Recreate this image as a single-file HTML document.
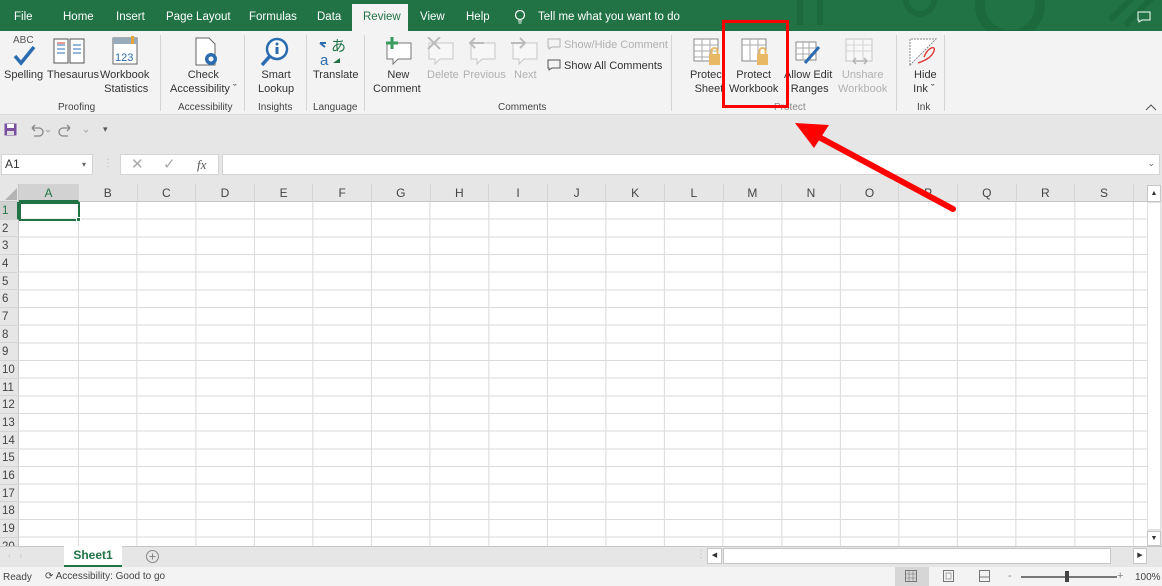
<!DOCTYPE html>
<html><head><meta charset="utf-8"><style>
*{margin:0;padding:0;box-sizing:border-box}
body{width:1162px;height:586px;overflow:hidden;background:#e6e6e6;font-family:"Liberation Sans",sans-serif;font-size:11px;color:#333;position:relative}
.a{position:absolute}
#tabs{left:0;top:0;width:1162px;height:31px;background:#217346}
.tab{position:absolute;top:11px;color:#fff;font-size:11.5px}
#rib{left:0;top:31px;width:1162px;height:84px;background:#f3f3f3;border-bottom:1px solid #dadada}
.lbl{position:absolute;text-align:center;font-size:11px;color:#333;line-height:14px;white-space:nowrap}
.dis{color:#b0b0b0}
.gl{position:absolute;top:71px;font-size:10px;color:#444;text-align:center}
.sep{position:absolute;top:4px;width:1px;height:76px;background:#d4d4d4}
.ch{position:absolute;top:184px;height:18px;border-right:1px solid #d4d4d4;text-align:center;font-size:12px;line-height:19px;color:#444;border-bottom:1px solid #c6c6c6}
.rh{position:absolute;left:0;width:19px;font-size:11.5px;color:#444;padding-left:2px;border-bottom:1px solid #d4d4d4;height:17.67px;line-height:18px}
</style></head><body>
<div id="tabs" class="a">
<div class="a" style="left:352px;top:4px;width:56px;height:28px;background:#f3f3f3"></div>
<span class="tab" style="left:14px">File</span>
<span class="tab" style="left:63px">Home</span>
<span class="tab" style="left:116px">Insert</span>
<span class="tab" style="left:166px">Page Layout</span>
<span class="tab" style="left:249px">Formulas</span>
<span class="tab" style="left:317px">Data</span>
<span class="tab" style="left:363px;color:#217346">Review</span>
<span class="tab" style="left:420px">View</span>
<span class="tab" style="left:466px">Help</span>
<svg class="a" style="left:514px;top:9px" width="12" height="16"><circle cx="6" cy="6" r="4.5" fill="none" stroke="#fff" stroke-width="1.2"/><path d="M4 12h4M4.5 14h3" stroke="#fff"/></svg>
<span class="tab" style="left:538px">Tell me what you want to do</span>
<svg class="a" style="left:780px;top:0" width="380" height="31" opacity=".25"><circle cx="230" cy="5" r="30" fill="none" stroke="#0d4d26" stroke-width="10"/><circle cx="140" cy="0" r="14" fill="none" stroke="#0d4d26" stroke-width="6"/><path d="M20 0v25M40 0v25M330 20l30-30M345 25l30-30" stroke="#0d4d26" stroke-width="6"/></svg>
<svg class="a" style="left:1137px;top:11px" width="14" height="12"><path d="M1 1h12v8H5l-3 2V9H1z" fill="none" stroke="#fff"/></svg>
</div>
<div id="rib" class="a">
<div class="a" style="left:13px;top:4px;font-size:10px;color:#555">ABC</div>
<svg class="a" style="left:12px;top:14px" width="26" height="22"><path d="M3 11l6 7L22 2" stroke="#2b6cb0" stroke-width="3.5" fill="none"/></svg>
<svg class="a" style="left:52px;top:5px" width="36" height="30"><path d="M2 3h14v24H2zM18 3h14v24H18z" fill="#fff" stroke="#555"/><path d="M5 9h8M5 13h8M5 17h8M21 9h8M21 13h8M21 17h8" stroke="#2b6cb0"/><path d="M5 7h8" stroke="#d33"/></svg>
<svg class="a" style="left:111px;top:5px" width="28" height="30"><rect x="2" y="2" width="24" height="26" fill="#fff" stroke="#666"/><rect x="2" y="2" width="24" height="6" fill="#9ab"/><text x="4" y="25" font-size="11" fill="#2b6cb0" font-family="Liberation Sans">123</text><rect x="20" y="0" width="3" height="8" fill="#e8a33d"/></svg>
<div class="lbl" style="left:4px;top:37px">Spelling</div>
<div class="lbl" style="left:47px;top:37px">Thesaurus</div>
<div class="lbl" style="left:100px;top:37px">Workbook<br>&nbsp;Statistics</div>
<div class="gl" style="left:58px">Proofing</div>
<div class="sep" style="left:160px"></div>
<svg class="a" style="left:193px;top:6px" width="28" height="30"><path d="M3 1h13l6 6v21H3z" fill="#fff" stroke="#666"/><circle cx="18" cy="22" r="6" fill="#2b6cb0"/><circle cx="18" cy="22" r="2.5" fill="#fff"/></svg>
<div class="lbl" style="left:170px;top:37px;text-align:center">Check<br>Accessibility ˇ</div>
<div class="gl" style="left:178px">Accessibility</div>
<div class="sep" style="left:244px"></div>
<svg class="a" style="left:260px;top:6px" width="30" height="30"><circle cx="17" cy="12" r="10" fill="#fff" stroke="#2b6cb0" stroke-width="2.5"/><path d="M10 19L2 28" stroke="#2b6cb0" stroke-width="3.5"/><path d="M17 10v7" stroke="#2b6cb0" stroke-width="3"/><circle cx="17" cy="7" r="1.5" fill="#2b6cb0"/></svg>
<div class="lbl" style="left:258px;top:37px">Smart<br>Lookup</div>
<div class="gl" style="left:258px">Insights</div>
<div class="sep" style="left:306px"></div>
<svg class="a" style="left:318px;top:6px" width="30" height="30"><text x="13" y="14" font-size="15" fill="#217346" font-family="Noto Sans CJK JP">あ</text><text x="2" y="28" font-size="15" fill="#2b6cb0" font-family="Liberation Sans">a</text><path d="M2 6l5 4M2 6h6" stroke="#2b6cb0" stroke-width="2"/><path d="M15 26l7-5v5z" fill="#217346"/></svg>
<div class="lbl" style="left:313px;top:37px">Translate</div>
<div class="gl" style="left:313px">Language</div>
<div class="sep" style="left:364px"></div>
<svg class="a" style="left:382px;top:6px" width="32" height="30"><path d="M5 6h24v16H16l-5 5v-5H5z" fill="#fff" stroke="#777"/><path d="M10 0v12M4 6h12" stroke="#3a9a5e" stroke-width="3"/></svg>
<svg class="a" style="left:424px;top:6px" width="32" height="30" opacity=".35"><path d="M5 6h24v16H16l-5 5v-5H5z" fill="#fff" stroke="#777"/><path d="M4 0l12 12M16 0L4 12" stroke="#555" stroke-width="2"/></svg>
<svg class="a" style="left:466px;top:6px" width="32" height="30" opacity=".35"><path d="M5 6h24v16H16l-5 5v-5H5z" fill="#fff" stroke="#777"/><path d="M18 6H4M9 1L4 6l5 5" stroke="#555" stroke-width="2" fill="none"/></svg>
<svg class="a" style="left:508px;top:6px" width="32" height="30" opacity=".35"><path d="M5 6h24v16H16l-5 5v-5H5z" fill="#fff" stroke="#777"/><path d="M3 6h14M12 1l5 5-5 5" stroke="#555" stroke-width="2" fill="none"/></svg>
<div class="lbl" style="left:373px;top:37px">&nbsp;New<br>Comment</div>
<div class="lbl dis" style="left:427px;top:37px">Delete</div>
<div class="lbl dis" style="left:463px;top:37px">Previous</div>
<div class="lbl dis" style="left:514px;top:37px">Next</div>
<svg class="a" style="left:547px;top:7px" width="14" height="12" opacity=".4"><path d="M1 1h12v8H5l-3 2V9H1z" fill="none" stroke="#555"/></svg>
<div class="lbl dis" style="left:564px;top:7px">Show/Hide Comment</div>
<svg class="a" style="left:547px;top:28px" width="14" height="12"><path d="M1 1h12v8H5l-3 2V9H1z" fill="none" stroke="#555"/></svg>
<div class="lbl" style="left:564px;top:28px">Show All Comments</div>
<div class="gl" style="left:498px">Comments</div>
<div class="sep" style="left:671px"></div>
<svg class="a" style="left:693px;top:7px" width="30" height="30"><rect x="1" y="1" width="24" height="22" fill="#fff" stroke="#888"/><path d="M1 7h24M1 13h24M1 19h24M9 1v22M17 1v22" stroke="#aaa"/><rect x="16" y="16" width="11" height="11" fill="#e8b864"/><path d="M18.5 16v-3a3 3 0 016 0v3" fill="none" stroke="#e8b864" stroke-width="2"/></svg>
<svg class="a" style="left:741px;top:7px" width="30" height="30"><rect x="1" y="1" width="24" height="22" fill="#fff" stroke="#888"/><path d="M1 7h24M9 1v22M17 1v22" stroke="#aaa"/><rect x="16" y="16" width="11" height="11" fill="#e8b864"/><path d="M18.5 16v-3a3 3 0 016 0v3" fill="none" stroke="#e8b864" stroke-width="2"/></svg>
<svg class="a" style="left:795px;top:8px" width="28" height="28"><rect x="1" y="3" width="20" height="18" fill="#fff" stroke="#888"/><path d="M1 9h20M1 15h20M8 3v18M14 3v18" stroke="#aaa"/><path d="M10 24L24 8" stroke="#2b6cb0" stroke-width="3"/></svg>
<svg class="a" style="left:845px;top:7px" width="30" height="30" opacity=".4"><rect x="1" y="1" width="26" height="22" fill="#fff" stroke="#888"/><path d="M1 7h26M1 13h26M9 1v22M18 1v22" stroke="#aaa"/><path d="M8 23h14M8 23l3-3M8 23l3 3M22 23l-3-3M22 23l-3 3" stroke="#555" stroke-width="1.5"/></svg>
<div class="lbl" style="left:690px;top:37px">Protect<br>&nbsp;Sheet</div>
<div class="lbl" style="left:729px;top:37px">Protect<br>Workbook</div>
<div class="lbl" style="left:784px;top:37px">Allow Edit<br>&nbsp;Ranges</div>
<div class="lbl dis" style="left:838px;top:37px">Unshare<br>Workbook</div>
<div class="gl" style="left:774px;color:#888">Protect</div>
<div class="sep" style="left:896px"></div>
<svg class="a" style="left:908px;top:6px" width="30" height="30"><path d="M2 28V2h26L2 28z" fill="#fff" stroke="#888" stroke-dasharray="2 1"/><path d="M10 26c6-2 14-6 16-12s-6-4-10 6" fill="none" stroke="#d33" stroke-width="1.3"/></svg>
<div class="lbl" style="left:911px;top:37px">&nbsp;Hide<br>Ink ˇ</div>
<div class="gl" style="left:917px">Ink</div>
<div class="sep" style="left:944px"></div>
<svg class="a" style="left:1145px;top:72px" width="12" height="8"><path d="M1 7l5-5 5 5" fill="none" stroke="#555"/></svg>
</div>
<svg class="a" style="left:4px;top:123px" width="13" height="13"><rect x="0.5" y="0.5" width="12" height="12" fill="#7b4fa0"/><rect x="3" y="1" width="7" height="4" fill="#fff"/><rect x="3" y="8" width="7" height="4" fill="#ddd"/></svg>
<svg class="a" style="left:28px;top:123px" width="70" height="14"><path d="M4 5h7a4 4 0 010 8H6M4 5l3-3M4 5l3 3" fill="none" stroke="#888" stroke-width="1.3"/><path d="M56 5h-7a4 4 0 000 8h5M56 5l-3-3M56 5l-3 3" fill="none" stroke="#888" stroke-width="1.3" transform="translate(-14 0)"/><path d="M18 7l2 2 2-2M56 7l2 2 2-2" fill="none" stroke="#aaa"/></svg>
<div class="a" style="left:103px;top:124px;font-size:9px;color:#555">▾</div>
<div class="a" style="left:1px;top:154px;width:92px;height:21px;background:#fff;border:1px solid #d4d4d4;font-size:12px;line-height:19px;padding-left:3px">A1<span style="position:absolute;right:6px;font-size:8px;color:#666">▾</span></div>
<div class="a" style="left:103px;top:158px;color:#bbb;font-size:10px">⋮</div>
<div class="a" style="left:120px;top:154px;width:99px;height:21px;background:#fff;border:1px solid #d4d4d4;color:#aaa;font-size:15px;line-height:19px"><span style="position:absolute;left:10px">✕</span><span style="position:absolute;left:42px">✓</span><span style="position:absolute;left:76px;font-family:'Liberation Serif';font-style:italic;color:#555;font-size:13px">fx</span></div>
<div class="a" style="left:222px;top:154px;width:938px;height:21px;background:#fff;border:1px solid #d4d4d4"><span style="position:absolute;right:4px;top:3px;font-size:9px;color:#666">⌄</span></div>
<div class="a" style="left:19px;top:202px;width:1128px;height:344px;background-color:#fff;background-image:repeating-linear-gradient(90deg,transparent 0 57.6px,#dadada 57.6px 58.6px),repeating-linear-gradient(180deg,transparent 0 16.67px,#dadada 16.67px 17.67px);background-position:1.4px 0,0 0"></div>
<div class="a" style="left:0;top:184px;width:19px;height:18px;background:#e6e6e6;border-right:1px solid #c6c6c6;border-bottom:1px solid #c6c6c6"><svg width="19" height="18"><path d="M17 4v12H5z" fill="#b4b4b4"/></svg></div>
<div class="ch" style="left:19px;width:60px;background:#d2d2d2;color:#217346;border-bottom:2px solid #217346">A</div>
<div class="ch" style="left:79px;width:58.6px">B</div><div class="ch" style="left:137.6px;width:58.6px">C</div><div class="ch" style="left:196.2px;width:58.6px">D</div><div class="ch" style="left:254.8px;width:58.6px">E</div><div class="ch" style="left:313.4px;width:58.6px">F</div><div class="ch" style="left:372px;width:58.6px">G</div><div class="ch" style="left:430.6px;width:58.6px">H</div><div class="ch" style="left:489.2px;width:58.6px">I</div><div class="ch" style="left:547.8px;width:58.6px">J</div><div class="ch" style="left:606.4px;width:58.6px">K</div><div class="ch" style="left:665px;width:58.6px">L</div><div class="ch" style="left:723.6px;width:58.6px">M</div><div class="ch" style="left:782.2px;width:58.6px">N</div><div class="ch" style="left:840.8px;width:58.6px">O</div><div class="ch" style="left:899.4px;width:58.6px">P</div><div class="ch" style="left:958px;width:58.6px">Q</div><div class="ch" style="left:1016.6px;width:58.6px">R</div><div class="ch" style="left:1075.2px;width:58.6px">S</div>
<div class="a" style="left:1133px;top:184px;width:14px;height:18px;border-bottom:1px solid #c6c6c6"></div>
<div class="a" style="left:0;top:202px;width:19px;height:344px;background:#e6e6e6;border-right:1px solid #c6c6c6"></div>
<div class="rh" style="top:202px;background:#d2d2d2;color:#217346;border-right:2px solid #217346">1</div>
<div class="rh" style="top:219.7px">2</div><div class="rh" style="top:237.3px">3</div><div class="rh" style="top:255px">4</div><div class="rh" style="top:272.7px">5</div><div class="rh" style="top:290.3px">6</div><div class="rh" style="top:308px">7</div><div class="rh" style="top:325.7px">8</div><div class="rh" style="top:343.3px">9</div><div class="rh" style="top:361px">10</div><div class="rh" style="top:378.7px">11</div><div class="rh" style="top:396.3px">12</div><div class="rh" style="top:414px">13</div><div class="rh" style="top:431.7px">14</div><div class="rh" style="top:449.3px">15</div><div class="rh" style="top:467px">16</div><div class="rh" style="top:484.7px">17</div><div class="rh" style="top:502.3px">18</div><div class="rh" style="top:520px">19</div><div class="rh" style="top:537.7px;height:9px;overflow:hidden">20</div>
<div class="a" style="left:19px;top:202px;width:61px;height:19px;border:2px solid #217346"></div>
<div class="a" style="left:76px;top:217px;width:5px;height:5px;background:#217346;border:1px solid #fff"></div>
<div class="a" style="left:1147px;top:184px;width:15px;height:362px;background:#e6e6e6"></div>
<div class="a" style="left:1147px;top:185px;width:14px;height:17px;background:#fff;border:1px solid #c6c6c6;font-size:7px;text-align:center;line-height:15px">▲</div>
<div class="a" style="left:1147px;top:202px;width:14px;height:328px;background:#fff;border:1px solid #e0e0e0"></div>
<div class="a" style="left:1147px;top:531px;width:14px;height:15px;background:#fff;border:1px solid #c6c6c6;font-size:7px;text-align:center;line-height:13px">▼</div>
<div class="a" style="left:0;top:546px;width:1162px;height:21px;background:#e6e6e6;border-top:1px solid #c6c6c6"></div>
<div class="a" style="left:8px;top:551px;color:#bbb;font-size:8px">‹&nbsp;&nbsp;&nbsp;&nbsp;›</div>
<div class="a" style="left:64px;top:546px;width:58px;height:21px;background:#fff;border-bottom:2px solid #217346;color:#217346;font-weight:bold;font-size:12px;text-align:center;line-height:19px">Sheet1</div>
<svg class="a" style="left:145px;top:549px" width="15" height="15"><circle cx="7.5" cy="7.5" r="6" fill="none" stroke="#888"/><path d="M7.5 4.5v6M4.5 7.5h6" stroke="#888"/></svg>
<div class="a" style="left:696px;top:549px;color:#bbb;font-size:10px">⋮</div>
<div class="a" style="left:707px;top:548px;width:15px;height:16px;background:#fff;border:1px solid #c6c6c6;font-size:7px;line-height:14px;text-align:center">◀</div>
<div class="a" style="left:723px;top:548px;width:388px;height:16px;background:#fff;border:1px solid #c6c6c6"></div>
<div class="a" style="left:1133px;top:548px;width:14px;height:16px;background:#fff;border:1px solid #c6c6c6;font-size:7px;line-height:14px;text-align:center">▶</div>
<div class="a" style="left:0;top:567px;width:1162px;height:19px;background:#f3f3f3"></div>
<div class="a" style="left:3px;top:572px;font-size:10px;color:#444">Ready</div>
<div class="a" style="left:45px;top:571px;font-size:10px;color:#444">⟳ Accessibility: Good to go</div>
<div class="a" style="left:895px;top:567px;width:34px;height:19px;background:#d6d6d6"></div>
<svg class="a" style="left:905px;top:570px" width="90" height="13"><rect x="0.5" y="0.5" width="11" height="11" fill="none" stroke="#777"/><path d="M0 4h12M0 8h12M4 0v12M8 0v12" stroke="#777" stroke-width=".6"/><rect x="38.5" y="0.5" width="10" height="11" fill="none" stroke="#777"/><rect x="41" y="3" width="5" height="6" fill="none" stroke="#777" stroke-width=".6"/><rect x="74.5" y="0.5" width="10" height="11" fill="none" stroke="#777"/><path d="M74 7h11" stroke="#777"/></svg>
<div class="a" style="left:1008px;top:570px;color:#888;font-size:11px">-</div>
<div class="a" style="left:1021px;top:576px;width:96px;height:2px;background:#777"></div>
<div class="a" style="left:1065px;top:571px;width:4px;height:11px;background:#444"></div>
<div class="a" style="left:1117px;top:570px;color:#888;font-size:11px">+</div>
<div class="a" style="left:1135px;top:572px;font-size:10px;color:#444">100%</div>
<div class="a" style="left:722px;top:20px;width:67px;height:88px;border:3px solid #f00"></div>
<svg class="a" style="left:0;top:0" width="1162" height="586"><path d="M953 209L817 136" stroke="#f00" stroke-width="6" stroke-linecap="round"/><path d="M795 123L829 125L814 148z" fill="#f00"/></svg>
</body></html>
